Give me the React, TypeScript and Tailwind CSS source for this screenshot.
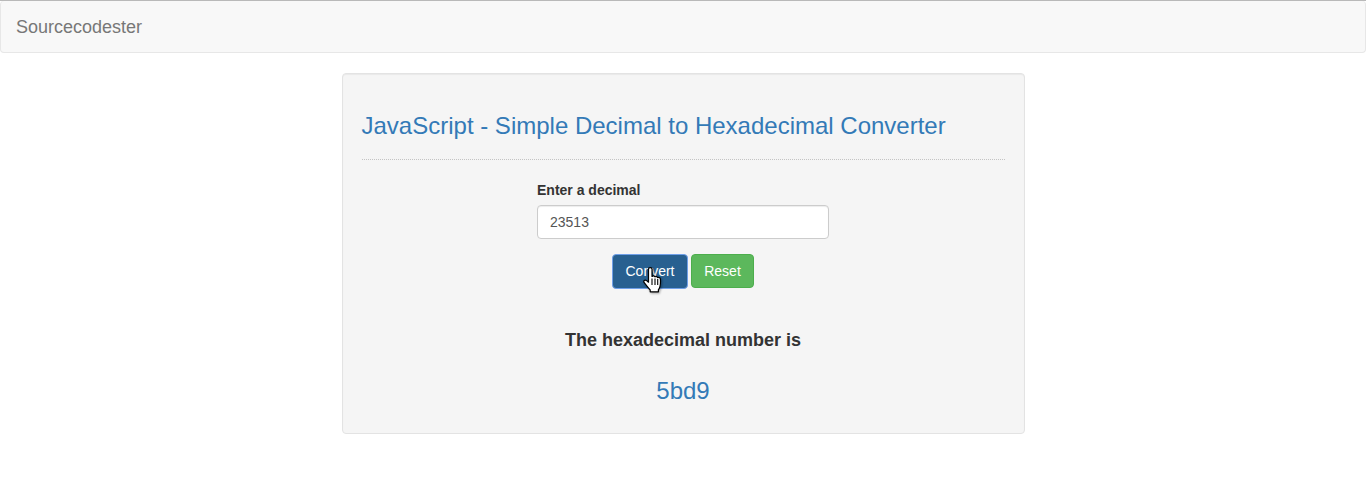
export default function App() {
  return (
    <div className="min-h-[481px] bg-white font-['Liberation_Sans',Arial,sans-serif] text-[14px] leading-[20px] text-[#333]">
      <div className="h-px bg-[#b9b9b9]" />
      <nav className="flex h-[52px] items-center rounded-[4px] border border-t-0 border-[#e7e7e7] bg-[#f8f8f8] px-[15px]">
        <span className="text-[18px] leading-[20px] text-[#777]">Sourcecodester</span>
      </nav>
      <main className="mx-auto mt-[20px] h-[361px] w-[683px] rounded-[4px] border border-[#e3e3e3] bg-[#f5f5f5] p-[19px] shadow-[inset_0_1px_1px_rgba(0,0,0,0.05)]">
        <h3 className="mt-[20px] border-b border-dotted border-[#c4c4c4] pb-[20px] text-[24px] leading-[26.4px] font-normal text-[#337ab7]">
          JavaScript - Simple Decimal to Hexadecimal Converter
        </h3>
        <div className="mx-auto mt-[20px] flex w-[292px] flex-col">
          <label className="mb-[5px] block font-bold">Enter a decimal</label>
          <input
            readOnly
            value="23513"
            className="h-[34px] w-full rounded-[4px] border border-[#ccc] bg-white px-[12px] text-[14px] text-[#555] shadow-[inset_0_1px_1px_rgba(0,0,0,0.075)] outline-none"
          />
          <div className="mt-[15px] flex justify-center gap-[3px]">
            <div className="relative">
              <button className="block h-[35px] w-[76px] rounded-[4px] border border-[#6f9fe8] bg-[#286090] pb-[2px] text-white">
                Convert
              </button>
              <svg
                className="absolute top-[13px] left-[31px] drop-shadow-[1px_1px_1px_rgba(0,0,0,0.35)]"
                width="19"
                height="26"
                viewBox="0 0 19 26"
              >
                <path
                  d="M5.500 2c0-1.800 3.500-1.800 3.500 0v7.500c.9-1 2.600-.7 3 .4.900-.7 2.400-.4 2.700.8 1-.6 2.600-.1 2.700 1.300.2 2.500.1 5.200-.4 7.300-.4 1.500-1 2.600-1.600 3.500v2H7.200v-1.800C5.500 21 3.200 18 1.200 15.600c-1.200-1.500.5-3.300 2.100-2.200l2.200 1.800V2z"
                  fill="#fff"
                  stroke="#000"
                  strokeWidth="1.200"
                  strokeLinejoin="round"
                />
                <path d="M9 11.500v6.500M12 11.500v6.500M14.700 12v6" stroke="#000" strokeWidth="1.100" fill="none" />
              </svg>
            </div>
            <button className="h-[34px] w-[63px] rounded-[4px] border border-[#4cae4c] bg-[#5cb85c] text-white">Reset</button>
          </div>
          <h4 className="mt-[41px] text-center text-[18px] leading-[20px] font-bold text-[#333]">The hexadecimal number is</h4>
          <h3 className="mt-[28px] text-center text-[24px] leading-[26.4px] font-normal text-[#337ab7]">5bd9</h3>
        </div>
      </main>
    </div>
  );
}
